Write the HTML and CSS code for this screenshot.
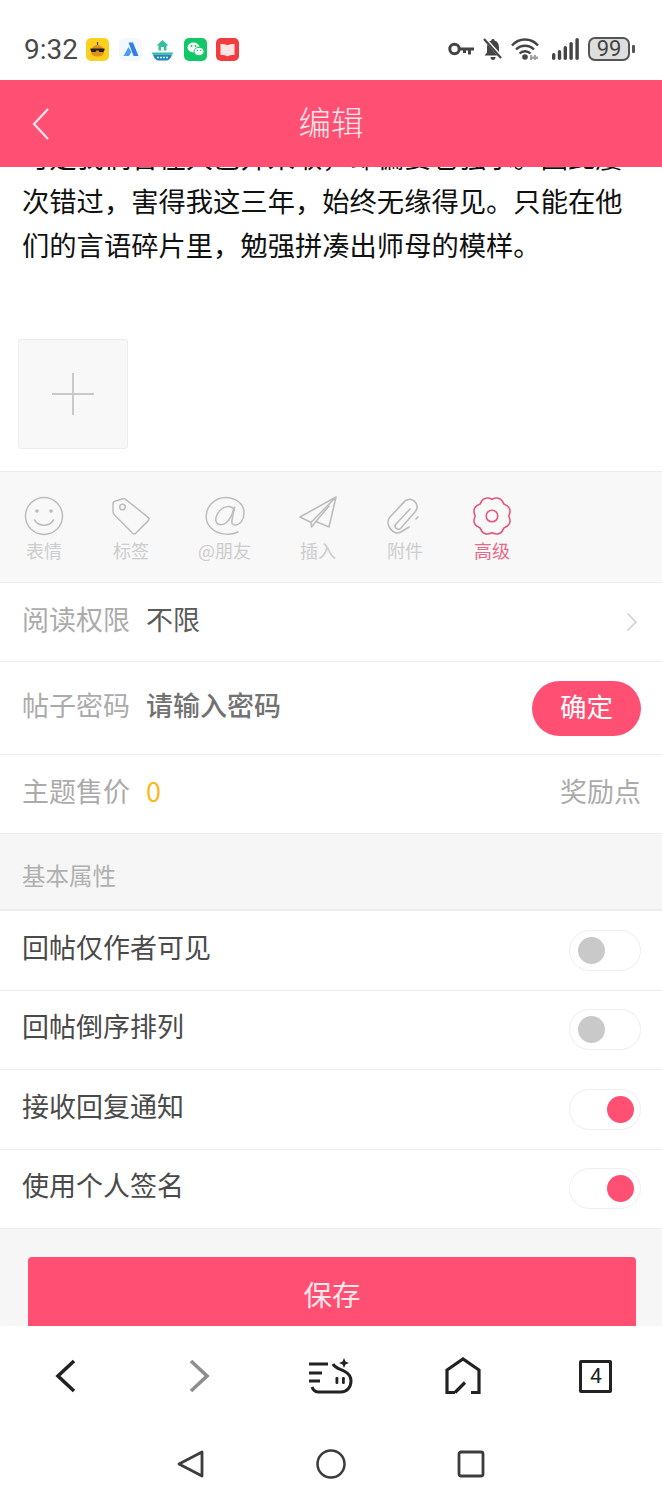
FILE: index.html
```html
<!DOCTYPE html>
<html lang="zh">
<head>
<meta charset="utf-8">
<title>编辑</title>
<link rel="stylesheet" href="styles.css">
</head>
<body>
<div class="screen">
  <div class="status">
    <span class="time">9:32</span>
    <div class="apps">
      <svg class="app" viewBox="0 0 23 23"><rect width="23" height="23" rx="5" fill="#fdcf1e"/><path d="M5 14c0-4 3-7 6.500-7S18 10 18 14c0 3-3 4.500-6.500 4.500S5 17 5 14z" fill="#e0901c"/><path d="M4.500 10.500h14v1.500l-1 2h-4l-1-1.500h-2l-1 1.500h-4l-1-2z" fill="#222"/><path d="M11.500 4v3" stroke="#444" stroke-width="1.200"/></svg>
      <svg class="app" viewBox="0 0 23 23"><rect width="23" height="23" rx="5" fill="#f2f8fe"/><path d="M9.500 4.500h4.500l5.500 13.500h-5l-2-5.500z" fill="#2f7fe6"/><path d="M9.500 9l3 5-2.500 4H4.500z" fill="#4d9cf0"/></svg>
      <svg class="app" viewBox="0 0 23 23"><path d="M11.500 2l6 5.500h-2V12.500h-8V7.500h-2z" fill="#33bfa0"/><rect x="10" y="9" width="3" height="3.500" fill="#fff"/><path d="M1 14.500h21c0 1-.2 1.500-.5 2H1.500c-.3-.5-.5-1-.5-2z" fill="#33bfa0"/><path d="M2 16.500h19c-1 3.500-3 6-5.500 6h-8C5 22.500 3 20 2 16.500z" fill="#1f88b8"/><path d="M6 19.500h11" stroke="#d8f0f6" stroke-width="1.500" stroke-dasharray="2 1"/></svg>
      <svg class="app" viewBox="0 0 23 23"><rect width="23" height="23" rx="5" fill="#12c866"/><ellipse cx="9.500" cy="9.500" rx="6" ry="5" fill="#fff"/><ellipse cx="15" cy="13.500" rx="5" ry="4.200" fill="#fff" stroke="#12c866"/><circle cx="7.500" cy="8" r="1" fill="#12c866"/><circle cx="11.500" cy="8" r="1" fill="#12c866"/><circle cx="13.500" cy="12.500" r=".8" fill="#12c866"/><circle cx="16.500" cy="12.500" r=".8" fill="#12c866"/></svg>
      <svg class="app" viewBox="0 0 23 23"><rect width="23" height="23" rx="5" fill="#f43b3f"/><path d="M4.500 6c3 0 5.500.3 7 1.300C13 6.300 15.500 6 18.500 6v11c-3 0-5.500.3-7 1.300-1.500-1-4-1.300-7-1.300z" fill="#fbe3e3"/></svg>
    </div>
    <div class="sys">
      <svg class="key" viewBox="0 0 26 14"><circle cx="6.500" cy="7" r="4.700" fill="none" stroke="#444" stroke-width="3"/><path d="M11 5.500h15v3h-3v4h-3v-4h-2v2.500h-3V8.500h-4z" fill="#444"/></svg>
      <svg class="bell" viewBox="0 0 20 22"><path d="M10 1c1 0 1.500.7 1.500 1.500C15 3.500 16 6.500 16 10v4.500l2.500 3H1.500l2.500-3V10c0-3.500 1-6.500 4.500-7.500C8.500 1.700 9 1 10 1z" fill="#444"/><path d="M7.500 19h5c0 2-1 3-2.500 3s-2.500-1-2.500-3z" fill="#444"/><path d="M2 1l17 19" stroke="#fff" stroke-width="3.500"/><path d="M1 1l17 19" stroke="#444" stroke-width="2.200"/></svg>
      <svg class="wifi" viewBox="0 0 28 22"><g fill="none" stroke="#444" stroke-width="2.300"><path d="M1 7.500C8-.5 20-.5 27 7.500"/><path d="M5 11.500c5-5 13-5 18 0"/><path d="M8.500 15.500c3-3 8-3 11 0"/></g><circle cx="14" cy="19" r="2.800" fill="#444"/><path d="M20 17v5M24 17v5M22 18.500v2.500M26 18.500v2.500" stroke="#444" stroke-width="1"/></svg>
      <svg class="signal" viewBox="0 0 27 22"><g fill="#444"><rect x="0" y="15" width="3.400" height="7" rx="1.700"/><rect x="5.800" y="12" width="3.400" height="10" rx="1.700"/><rect x="11.600" y="8" width="3.400" height="14" rx="1.700"/><rect x="17.400" y="4" width="3.400" height="18" rx="1.700"/><rect x="23.400" y="0" width="3.400" height="22" rx="1.700"/></g></svg>
      <div class="battery"><span class="cell">99</span><span class="nub"></span></div>
    </div>
  </div>

  <header class="topbar">
    <svg class="back" viewBox="0 0 18 32"><path d="M16 1L2 16l14 15" fill="none" stroke="#fde6ea" stroke-width="2.200"/></svg>
    <h1 class="title">编辑</h1>
  </header>

  <main class="main">
    <div class="article">
      <p class="body-text">可是我们曾往大邑并来取，却偏要它强求。因此屡次错过，害得我这三年，始终无缘得见。只能在他们的言语碎片里，勉强拼凑出师母的模样。</p>
    </div>

    <div class="attach">
      <div class="add-tile"><span class="plus"></span></div>
    </div>

    <div class="toolbar">
      <div class="tool">
        <svg class="tool-icon" viewBox="0 0 40 40"><g fill="none" stroke="#bdbdbd" stroke-width="1.500"><circle cx="20" cy="20" r="18.500"/><path d="M10.500 24c4.500 7 14.500 7 19 0" stroke-linecap="round"/></g><circle cx="13" cy="15" r="1.800" fill="#bdbdbd"/><circle cx="27" cy="15" r="1.800" fill="#bdbdbd"/></svg>
        <span class="tool-label">表情</span>
      </div>
      <div class="tool">
        <svg class="tool-icon" viewBox="0 0 40 40"><g fill="none" stroke="#bdbdbd" stroke-width="1.500" stroke-linejoin="round"><path d="M2 7.500c0-1.200.8-2 1.800-2.300l8-2.500c1-.3 2-.1 2.800.6l22.500 18c1 .9 1.100 2.300.2 3.300L25 37c-.9 1-2.300 1.100-3.300.2L3.500 19C2.600 18.100 2 17 2 15.800z"/><circle cx="11.500" cy="11" r="2.800"/></g></svg>
        <span class="tool-label">标签</span>
      </div>
      <div class="tool tool-at">
        <svg class="tool-icon" viewBox="0 0 40 40"><g fill="none" stroke="#bdbdbd" stroke-width="1.500" stroke-linecap="round"><path d="M33 36C28 39 14 40 6 32S0 9 13 3c11-4 26 1 26 14 0 7-4 12-9 12-3 0-3.500-2-3-4.500L29.500 11"/><path d="M29.500 14c-3-5-9-4-13-1-4.500 3.500-7 10-5 13.500 2 3 6.500 3 10 0 3-3 6-8 7-13"/></g></svg>
        <span class="tool-label">@朋友</span>
      </div>
      <div class="tool">
        <svg class="tool-icon" viewBox="0 0 40 40"><g fill="none" stroke="#bdbdbd" stroke-width="1.600" stroke-linejoin="round" stroke-linecap="round"><path d="M38 1L2 21l11 5.500L38 1 31 31l-13-5.500-4.500 5.500-.5-4.500"/><path d="M18 25.500L31 10"/></g></svg>
        <span class="tool-label">插入</span>
      </div>
      <div class="tool">
        <svg class="tool-icon" viewBox="0 0 40 40"><g fill="none" stroke="#bdbdbd" stroke-width="1.700" stroke-linecap="round"><path d="M25 13L11 28c-3 3.500 2 7 5 4L30 16c6-6-2-17-10-11L5 21c-6 7 3 19 11 15l8-5"/><path d="M31 23l2-2"/></g></svg>
        <span class="tool-label">附件</span>
      </div>
      <div class="tool tool-active">
        <svg class="tool-icon" viewBox="0 0 40 40"><g fill="none" stroke="#e2577a" stroke-width="1.600" stroke-linejoin="round"><path d="M20 3.200Q28.600-.8 31.900 8.100 40.800 11.400 36.800 20 40.800 28.600 31.900 31.900 28.600 40.800 20 36.800 11.400 40.800 8.100 31.900-.8 28.600 3.200 20-.8 11.400 8.100 8.100 11.400-.8 20 3.200z"/><circle cx="20" cy="20" r="5.800"/></g></svg>
        <span class="tool-label">高级</span>
      </div>
    </div>

    <div class="row row-perm">
      <span class="row-label">阅读权限</span>
      <span class="row-value">不限</span>
      <svg class="chev" viewBox="0 0 12 20"><path d="M1.500 1.500L10 10l-8.500 8.500" fill="none" stroke="#c8c8c8" stroke-width="1.300"/></svg>
    </div>
    <div class="row row-pass">
      <span class="row-label">帖子密码</span>
      <span class="row-value row-hint">请输入密码</span>
      <button class="confirm">确定</button>
    </div>
    <div class="row row-price">
      <span class="row-label">主题售价</span>
      <span class="row-value row-num">0</span>
      <span class="row-unit">奖励点</span>
    </div>
    <div class="section">基本属性</div>
    <div class="row row-opt"><span class="opt-label">回帖仅作者可见</span><span class="switch"><span class="knob"></span></span></div>
    <div class="row row-opt"><span class="opt-label">回帖倒序排列</span><span class="switch"><span class="knob"></span></span></div>
    <div class="row row-opt"><span class="opt-label">接收回复通知</span><span class="switch switch-on"><span class="knob"></span></span></div>
    <div class="row row-opt"><span class="opt-label">使用个人签名</span><span class="switch switch-on"><span class="knob"></span></span></div>
    <div class="save-wrap"><button class="save">保存</button></div>
  </main>

  <nav class="browser">
    <svg class="nav-icon" viewBox="0 0 24 36"><path d="M20 3L4 18l16 15" fill="none" stroke="#222" stroke-width="3.600"/></svg>
    <svg class="nav-icon" viewBox="0 0 24 36"><path d="M4 3l16 15L4 33" fill="none" stroke="#8e8e8e" stroke-width="3.600"/></svg>
    <svg class="nav-wide" viewBox="0 0 44 36"><g fill="none" stroke="#222" stroke-width="3"><path d="M0 6h19M0 15h13M0 23h11"/><path d="M3 29c1 3 3 5 7 5h22c6 0 10-5 10-11 0-5-3-8-7-10-4-2-9-3-11-7"/></g><path d="M35 0l1.500 3.500L40 5l-3.500 1.500L35 10l-1.500-3.500L30 5l3.500-1.500z" fill="#222"/><rect x="26.500" y="19" width="2.800" height="7" rx="1.200" fill="#222"/><rect x="33" y="19" width="2.800" height="7" rx="1.200" fill="#222"/></svg>
    <svg class="nav-home" viewBox="0 0 38 38"><path d="M11 35.500H3V13L19 2l16 11v22.500h-8M11 35.500l10-10" fill="none" stroke="#222" stroke-width="3.200"/></svg>
    <span class="tabs">4</span>
  </nav>
  <nav class="system">
    <svg class="sys-btn" viewBox="0 0 30 30"><path d="M26 3v24L3 15z" fill="none" stroke="#3c3c3c" stroke-width="2.800" stroke-linejoin="round"/></svg>
    <svg class="sys-btn" viewBox="0 0 30 30"><circle cx="15" cy="15" r="13.500" fill="none" stroke="#3c3c3c" stroke-width="2.500"/></svg>
    <svg class="sys-btn" viewBox="0 0 30 30"><rect x="3" y="3" width="24" height="24" rx="2" fill="none" stroke="#3c3c3c" stroke-width="2.800"/></svg>
  </nav>
</div>
</body>
</html>
```

FILE: styles.css
```css
* { box-sizing: border-box; }
html, body { margin: 0; padding: 0; }
body { background: #fff; font-family: "Noto Sans CJK SC", "Noto Sans", sans-serif; }
.screen { width: 662px; height: 1500px; overflow: hidden; display: flex; flex-direction: column; background: #fff; }

.status { height: 80px; flex: none; display: flex; align-items: center; padding: 18px 27px 0 24px; background: #fff; }
.time { font-family: Roboto, sans-serif; font-size: 28px; color: #4a4a4a; width: 62px; }
.apps { display: flex; gap: 9.500px; }
.app { width: 23px; height: 23px; display: block; }
.sys { margin-left: auto; display: flex; align-items: center; }
.key { width: 26px; height: 14px; display: block; margin-right: 9px; }
.bell { width: 20px; height: 22px; display: block; margin-right: 8px; }
.wifi { width: 28px; height: 22px; display: block; margin-right: 13px; }
.signal { width: 27px; height: 22px; display: block; margin-right: 9px; }
.battery { display: flex; align-items: center; }
.cell { width: 42px; height: 24px; border: 2px solid #555; border-radius: 7px; background: #dedede; font-family: Roboto, sans-serif; font-size: 22px; line-height: 20px; text-align: center; color: #444; }
.nub { width: 3px; height: 8px; margin-left: 2px; background: #555; border-radius: 1px; }

.topbar { height: 87px; flex: none; background: #ff4f73; display: flex; align-items: center; justify-content: center; position: relative; z-index: 2; padding-bottom: 5px; }
.back { position: absolute; left: 32px; top: 28px; width: 18px; height: 32px; }
.title { margin: 0; font-size: 32.500px; font-weight: 300; color: #fde6ea; line-height: 1; }

.main { flex: 1; min-height: 0; overflow: hidden; display: flex; flex-direction: column; background: #f6f6f6; }
.article { height: 114px; flex: none; background: #fff; padding: 0 22px; overflow: hidden; }
.body-text { margin: -33px 0 0; font-size: 27.300px; line-height: 44px; color: #111; }
.attach { height: 190px; flex: none; background: #fff; padding: 58px 0 0 18px; }
.add-tile { width: 110px; height: 110px; background: #f8f8f8; border: 1px solid #ececec; border-radius: 3px; display: flex; align-items: center; justify-content: center; }
.plus { width: 42px; height: 42px; display: block; background: linear-gradient(#c9c9c9, #c9c9c9) center / 100% 2px no-repeat, linear-gradient(#c9c9c9, #c9c9c9) center / 2px 100% no-repeat; }

.toolbar { height: 111px; flex: none; background: #f8f8f8; border-top: 1px solid #ececec; display: flex; gap: 47px; padding: 24px 0 0 24px; }
.tool { display: flex; flex-direction: column; align-items: center; }
.tool-icon { width: 40px; height: 40px; display: block; }
.tool-label { font-size: 18px; line-height: 24px; margin-top: 2px; color: #cdcdcd; white-space: nowrap; }
.tool-active .tool-label { color: #e8688a; }

.row { display: flex; align-items: center; background: #fff; border-top: 1px solid #ececec; padding: 0 21px 0 22px; flex: none; font-size: 27px; }
.row-perm { height: 79px; }
.row-pass { height: 93px; }
.row-price { height: 79px; }
.row-opt { height: 79.500px; justify-content: space-between; }
.row-label { width: 124px; color: #ababab; padding-bottom: 7px; }
.row-value { color: #5a5a5a; padding-bottom: 7px; }
.row-hint { color: #727272; font-weight: 500; }
.row-num { color: #fbb91f; }
.row-unit { margin-left: auto; color: #ababab; padding-bottom: 7px; }
.chev { width: 12px; height: 20px; margin: 0 3px 0 auto; display: block; }
.confirm { margin-left: auto; width: 109px; height: 55px; border: 0; border-radius: 28px; background: #ff4f73; color: #fff; font: inherit; font-size: 26.500px; padding: 0 0 6px; }
.section { height: 77px; flex: none; background: #f6f6f6; border-top: 1px solid #ececec; border-bottom: 1px solid #ececec; padding: 7px 22px 0; display: flex; align-items: center; font-size: 23.500px; color: #b0b0b0; }
.opt-label { color: #4a4a4a; padding-bottom: 8px; }
.switch { width: 72px; height: 41px; border: 1px solid #eeeeee; border-radius: 21px; background: #fff; display: flex; align-items: center; padding: 0 6px 0 8px; }
.switch-on { justify-content: flex-end; }
.knob { width: 27px; height: 27px; border-radius: 50%; background: #c9c9c9; }
.switch-on .knob { background: #ff4f73; }
.save-wrap { flex: 1; min-height: 0; background: #f6f6f6; padding: 28px 26px 0 28px; border-top: 1px solid #ececec; }
.save { width: 100%; height: 78px; border: 0; border-radius: 4px 4px 0 0; background: #ff4f73; color: #fde6ea; font: inherit; font-size: 28.500px; padding: 0 0 6px; }

.browser { height: 100px; flex: none; background: #fff; display: grid; grid-template-columns: repeat(5, 1fr); align-items: center; justify-items: center; }
.nav-icon { width: 24px; height: 36px; display: block; }
.nav-wide { width: 44px; height: 36px; display: block; }
.nav-home { width: 38px; height: 38px; display: block; }
.tabs { width: 33px; height: 33px; border: 3.500px solid #222; border-radius: 2px; font-family: Roboto, sans-serif; font-size: 21px; line-height: 26px; text-align: center; color: #222; }
.system { height: 74px; flex: none; background: #fff; display: flex; justify-content: center; gap: 110px; align-items: center; padding-top: 2px; }
.sys-btn { width: 30px; height: 30px; display: block; }
```
